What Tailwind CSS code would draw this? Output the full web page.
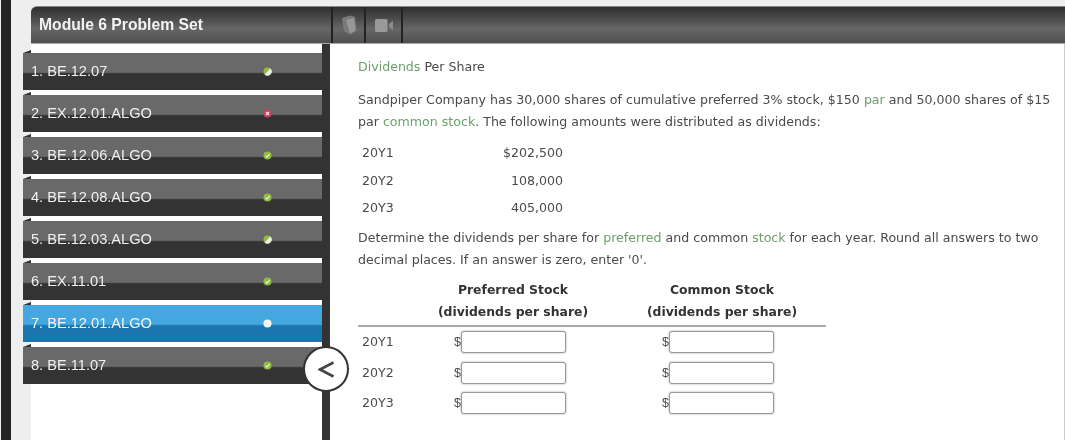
<!DOCTYPE html>
<html lang="en">
<head>
  <meta charset="UTF-8" />
  <title>Module 6 Problem Set</title>
  <script src="https://cdn.jsdelivr.net/npm/@tailwindcss/browser@4"></script>
</head>
<body class="m-0 overflow-hidden bg-[#eee]">
<div class="flex h-[440px] w-[1065px] overflow-hidden bg-[#eee] font-['Liberation_Sans',sans-serif] blur-[0.5px]">
  <!-- page edge -->
  <div class="ml-px h-full w-[10px] shrink-0 bg-[#242424]"></div>

  <div class="ml-[20px] flex min-w-0 flex-1 flex-col pt-[6px]">
    <!-- Title bar -->
    <header class="flex h-[38px] shrink-0 items-stretch rounded-tl-[6px] border-t border-b border-t-[#888] border-b-[#aaa] bg-gradient-to-b from-[#2e2e2e] via-[#666] via-60% to-[#505050]">
      <h1 class="flex w-[300px] items-center pl-[8px] text-[15.7px] font-bold text-[#f2f2f2]">Module 6 Problem Set</h1>
      <div class="flex w-[33px] items-center justify-center border-l-2 border-[#222]">
        <svg width="16" height="20" viewBox="0 0 16 20"><path d="M1 3 L9 0.5 L14 2 L15.5 16 L9 19.5 L3 16 Z" fill="#7a7a7a"/><path d="M5 5 L13 3 L14.5 15.5 L9 18.5 Z" fill="#989898"/></svg>
      </div>
      <div class="flex w-[37px] items-center justify-center border-l-2 border-[#222]">
        <svg width="18" height="13" viewBox="0 0 18 13"><rect x="0" y="0" width="12.5" height="13" rx="1.5" fill="#999"/><path d="M14 5 L18 1.5 V11.5 L14 8 Z" fill="#8a8a8a"/></svg>
      </div>
      <div class="flex-1 border-l-2 border-[#222]"></div>
    </header>

    <div class="flex min-h-0 flex-1">
      <!-- Problem list -->
      <nav class="relative flex w-[291px] shrink-0 flex-col gap-[5px] bg-white pt-[9px]">
        <a class="relative -ml-[8px] flex h-[37px] items-center justify-between bg-[linear-gradient(#696969_0,#696969_52%,#333_56%,#333_100%)] pl-[8px] text-[14.6px] text-[#f0f0f0] before:absolute before:-top-[3px] before:left-0 before:border-b-[3px] before:border-l-[8px] before:border-b-[#333] before:border-l-transparent before:content-['']">
          <span class="pt-px">1. BE.12.07</span>
          <svg class="mr-[50px]" width="9" height="9" viewBox="0 0 10 10"><circle cx="5" cy="5" r="4.5" fill="#8fbc3f"/><path d="M8.2 1.8 A4.5 4.5 0 0 1 1.8 8.2 Z" fill="#eee"/></svg>
        </a>
        <a class="relative -ml-[8px] flex h-[37px] items-center justify-between bg-[linear-gradient(#696969_0,#696969_52%,#333_56%,#333_100%)] pl-[8px] text-[14.6px] text-[#f0f0f0] before:absolute before:-top-[3px] before:left-0 before:border-b-[3px] before:border-l-[8px] before:border-b-[#333] before:border-l-transparent before:content-['']">
          <span class="pt-px">2. EX.12.01.ALGO</span>
          <svg class="mr-[50px]" width="9" height="9" viewBox="0 0 10 10"><circle cx="5" cy="5" r="4.5" fill="#c9405f"/><path d="M3.3 3.3 L6.7 6.7 M6.7 3.3 L3.3 6.7" stroke="#f6dbe1" stroke-width="1.4"/></svg>
        </a>
        <a class="relative -ml-[8px] flex h-[37px] items-center justify-between bg-[linear-gradient(#696969_0,#696969_52%,#333_56%,#333_100%)] pl-[8px] text-[14.6px] text-[#f0f0f0] before:absolute before:-top-[3px] before:left-0 before:border-b-[3px] before:border-l-[8px] before:border-b-[#333] before:border-l-transparent before:content-['']">
          <span class="pt-px">3. BE.12.06.ALGO</span>
          <svg class="mr-[50px]" width="9" height="9" viewBox="0 0 10 10"><circle cx="5" cy="5" r="4.5" fill="#8fbc3f"/><path d="M2.8 5.2 L4.4 6.8 L7.4 3.4" fill="none" stroke="#eef5dc" stroke-width="1.3"/></svg>
        </a>
        <a class="relative -ml-[8px] flex h-[37px] items-center justify-between bg-[linear-gradient(#696969_0,#696969_52%,#333_56%,#333_100%)] pl-[8px] text-[14.6px] text-[#f0f0f0] before:absolute before:-top-[3px] before:left-0 before:border-b-[3px] before:border-l-[8px] before:border-b-[#333] before:border-l-transparent before:content-['']">
          <span class="pt-px">4. BE.12.08.ALGO</span>
          <svg class="mr-[50px]" width="9" height="9" viewBox="0 0 10 10"><circle cx="5" cy="5" r="4.5" fill="#8fbc3f"/><path d="M2.8 5.2 L4.4 6.8 L7.4 3.4" fill="none" stroke="#eef5dc" stroke-width="1.3"/></svg>
        </a>
        <a class="relative -ml-[8px] flex h-[37px] items-center justify-between bg-[linear-gradient(#696969_0,#696969_52%,#333_56%,#333_100%)] pl-[8px] text-[14.6px] text-[#f0f0f0] before:absolute before:-top-[3px] before:left-0 before:border-b-[3px] before:border-l-[8px] before:border-b-[#333] before:border-l-transparent before:content-['']">
          <span class="pt-px">5. BE.12.03.ALGO</span>
          <svg class="mr-[50px]" width="9" height="9" viewBox="0 0 10 10"><circle cx="5" cy="5" r="4.5" fill="#8fbc3f"/><path d="M8.2 1.8 A4.5 4.5 0 0 1 1.8 8.2 Z" fill="#eee"/></svg>
        </a>
        <a class="relative -ml-[8px] flex h-[37px] items-center justify-between bg-[linear-gradient(#696969_0,#696969_52%,#333_56%,#333_100%)] pl-[8px] text-[14.6px] text-[#f0f0f0] before:absolute before:-top-[3px] before:left-0 before:border-b-[3px] before:border-l-[8px] before:border-b-[#333] before:border-l-transparent before:content-['']">
          <span class="pt-px">6. EX.11.01</span>
          <svg class="mr-[50px]" width="9" height="9" viewBox="0 0 10 10"><circle cx="5" cy="5" r="4.5" fill="#8fbc3f"/><path d="M2.8 5.2 L4.4 6.8 L7.4 3.4" fill="none" stroke="#eef5dc" stroke-width="1.3"/></svg>
        </a>
        <a class="relative -ml-[8px] flex h-[37px] items-center justify-between bg-[linear-gradient(#45a7df_0,#45a7df_52%,#1a76ae_56%,#1a76ae_100%)] pl-[8px] text-[14.6px] text-[#f4f4f4] before:absolute before:-top-[3px] before:left-0 before:border-b-[3px] before:border-l-[8px] before:border-b-[#333] before:border-l-transparent before:content-['']">
          <span class="pt-px">7. BE.12.01.ALGO</span>
          <svg class="mr-[50px]" width="9" height="9" viewBox="0 0 10 10"><circle cx="5" cy="5" r="4.5" fill="#f4f4f4"/></svg>
        </a>
        <a class="relative -ml-[8px] flex h-[37px] items-center justify-between bg-[linear-gradient(#696969_0,#696969_52%,#333_56%,#333_100%)] pl-[8px] text-[14.6px] text-[#f0f0f0] before:absolute before:-top-[3px] before:left-0 before:border-b-[3px] before:border-l-[8px] before:border-b-[#333] before:border-l-transparent before:content-['']">
          <span class="pt-px">8. BE.11.07</span>
          <svg class="mr-[50px]" width="9" height="9" viewBox="0 0 10 10"><circle cx="5" cy="5" r="4.5" fill="#8fbc3f"/><path d="M2.8 5.2 L4.4 6.8 L7.4 3.4" fill="none" stroke="#eef5dc" stroke-width="1.3"/></svg>
        </a>
      </nav>

      <div class="w-[8px] shrink-0 bg-[#333]"></div>

      <!-- Problem text -->
      <main class="min-w-0 flex-1 border-r border-[#ccc] bg-white pt-[12px] pl-[28px] font-['DejaVu_Sans',sans-serif] text-[12.6px] leading-[22px] text-[#4a4a4a]">
        <p><span class="text-[#6d9f6d]">Dividends</span> Per Share</p>
        <p class="mt-[11px] whitespace-nowrap">Sandpiper Company has 30,000 shares of cumulative preferred 3% stock, $150 <span class="text-[#6d9f6d]">par</span> and 50,000 shares of $15<br />par <span class="text-[#6d9f6d]">common stock</span>. The following amounts were distributed as dividends:</p>

        <div class="mt-[5px] grid w-[205px] translate-y-px grid-cols-[80px_121px] pl-[4px] leading-[27.7px]">
          <span>20Y1</span><span class="text-right">$202,500</span>
          <span>20Y2</span><span class="text-right">108,000</span>
          <span>20Y3</span><span class="text-right">405,000</span>
        </div>

        <p class="mt-[6px] whitespace-nowrap">Determine the dividends per share for <span class="text-[#6d9f6d]">preferred</span> and common <span class="text-[#6d9f6d]">stock</span> for each year. Round all answers to two<br />decimal places. If an answer is zero, enter '0'.</p>

        <div class="mt-[8px] grid w-[468px] grid-cols-[79px_209px_180px]">
          <div></div>
          <div class="w-[152px] text-center text-[12.4px] font-bold text-[#333]">Preferred Stock<br />(dividends per share)</div>
          <div class="w-[152px] text-center text-[12.4px] font-bold text-[#333]">Common Stock<br />(dividends per share)</div>
          <div class="col-span-3 mt-[2px] h-[2px] bg-[#aaa]"></div>

          <div class="flex h-[30.5px] items-center pl-[4px]">20Y1</div>
          <div class="flex h-[30.5px] items-center pl-[17px]"><span class="w-[7px] font-['Liberation_Sans',sans-serif]">$</span><input type="text" class="h-[22px] w-[105px] rounded-[3px] border border-[#999] bg-white shadow-[0_0_2px_#999]" /></div>
          <div class="flex h-[30.5px] items-center pl-[16px]"><span class="w-[7px] font-['Liberation_Sans',sans-serif]">$</span><input type="text" class="h-[22px] w-[105px] rounded-[3px] border border-[#999] bg-white shadow-[0_0_2px_#999]" /></div>

          <div class="flex h-[30.5px] items-center pl-[4px]">20Y2</div>
          <div class="flex h-[30.5px] items-center pl-[17px]"><span class="w-[7px] font-['Liberation_Sans',sans-serif]">$</span><input type="text" class="h-[22px] w-[105px] rounded-[3px] border border-[#999] bg-white shadow-[0_0_2px_#999]" /></div>
          <div class="flex h-[30.5px] items-center pl-[16px]"><span class="w-[7px] font-['Liberation_Sans',sans-serif]">$</span><input type="text" class="h-[22px] w-[105px] rounded-[3px] border border-[#999] bg-white shadow-[0_0_2px_#999]" /></div>

          <div class="flex h-[30.5px] items-center pl-[4px]">20Y3</div>
          <div class="flex h-[30.5px] items-center pl-[17px]"><span class="w-[7px] font-['Liberation_Sans',sans-serif]">$</span><input type="text" class="h-[22px] w-[105px] rounded-[3px] border border-[#999] bg-white shadow-[0_0_2px_#999]" /></div>
          <div class="flex h-[30.5px] items-center pl-[16px]"><span class="w-[7px] font-['Liberation_Sans',sans-serif]">$</span><input type="text" class="h-[22px] w-[105px] rounded-[3px] border border-[#999] bg-white shadow-[0_0_2px_#999]" /></div>
        </div>
      </main>
    </div>
  </div>

  <!-- collapse toggle sits over the divider -->
  <button class="absolute top-[346px] left-[303px] flex h-[46px] w-[46px] items-center justify-center rounded-full border-2 border-[#333] bg-white">
    <svg width="17" height="17" viewBox="0 0 17 17"><path d="M15.5 1.5 L2 8.5 L15.5 15.5" fill="none" stroke="#444" stroke-width="2.6"/></svg>
  </button>
</div>
</body>
</html>
